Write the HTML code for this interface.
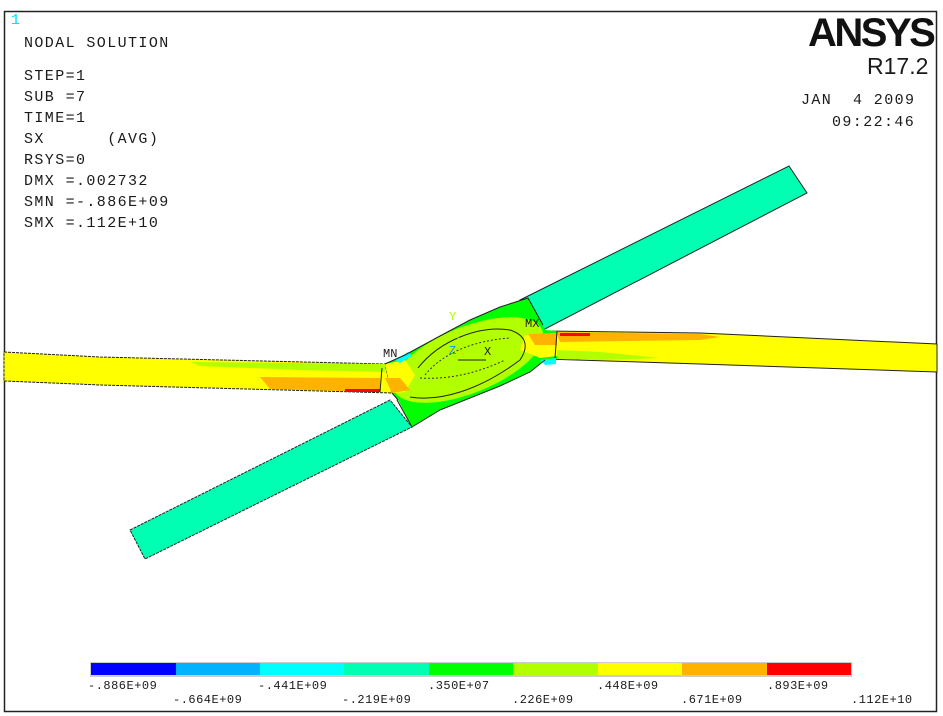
<!DOCTYPE html>
<html><head><style>
html,body{margin:0;padding:0;background:#fff;}
body{width:943px;height:716px;position:relative;overflow:hidden;font-family:"Liberation Mono",monospace;}
.t{position:absolute;font-size:15px;color:#1a1a1a;white-space:pre;line-height:15px;letter-spacing:1.4px;}
.s{letter-spacing:0.5px;font-size:12px;line-height:13px;}
</style></head><body>
<svg width="943" height="716" style="position:absolute;left:0;top:0">
<rect x="4.5" y="11.5" width="932" height="700" fill="none" stroke="#222" stroke-width="1.5"/>
<polygon points="4,352 100,357 385,364 392,393 100,385 4,381" fill="#ffff00" stroke="#222" stroke-width="1" stroke-dasharray="3,1"/>
<polygon points="190,362 385,364 385,372 300,370 200,366" fill="#b2ff00"/>
<polygon points="260,377 380,378 380,392 270,389" fill="#ffb200"/>
<polygon points="345,389 380,389 380,392 345,392" fill="#ff0000"/>
<polygon points="545,331 700,333 937,344 937,372 700,364 545,359" fill="#ffff00" stroke="#222" stroke-width="1"/>
<polygon points="556,332 700,334 720,337 700,340 560,342" fill="#ffb200"/>
<polygon points="560,333 590,333 590,336 560,336" fill="#ff0000"/>
<polygon points="556,350 600,352 660,358 600,360 556,359" fill="#b2ff00"/>
<polygon points="130,530 390,400 412,427 145,559" fill="#00ffb2" stroke="#222" stroke-width="1" stroke-dasharray="3,1"/>
<polygon points="520,300 789,166 807,193 543,330" fill="#00ffb2" stroke="#222" stroke-width="1"/>
<polygon points="385,364 405,355 440,336 470,320 500,307 528,298 545,330 557,331 557,359 545,360 530,372 500,386 470,398 440,410 412,427 398,400 392,393" fill="#00ff00"/>
<ellipse cx="468" cy="360" rx="80" ry="33" transform="rotate(-22 468 360)" fill="#b2ff00"/>
<polygon points="385,364 405,360 415,375 405,392 392,393" fill="#ffff00"/>
<polygon points="385,378 400,378 410,390 392,393" fill="#ffb200"/>
<polygon points="525,335 557,333 557,356 540,358 520,350" fill="#ffff00"/>
<polygon points="528,334 557,333 557,345 535,345" fill="#ffb200"/>
<polygon points="395,360 408,352 412,356 400,363" fill="#00ffff"/>
<polygon points="540,360 556,358 556,364 545,365" fill="#00ffff"/>
<path d="M385,364 L405,355 440,336 470,320 500,307 528,298" fill="none" stroke="#222" stroke-width="1"/>
<path d="M392,393 L398,400" fill="none" stroke="#222"/>
<path d="M545,360 L530,372 500,386 470,398 440,410 412,427" fill="none" stroke="#222"/>
<path d="M410,397 C440,402 480,390 520,360 C530,345 525,335 510,330 C480,325 440,340 418,368" fill="none" stroke="#222" stroke-width="1"/>
<path d="M425,375 C445,350 480,340 510,338 M420,378 C450,380 480,372 505,360" fill="none" stroke="#333" stroke-width="1" stroke-dasharray="2,2"/>
<path d="M382,368 L380,392 M557,331 L555,358 M528,298 L543,325 M397,400 L412,427" fill="none" stroke="#222" stroke-width="1"/>
<path d="M458,360 L486,360" stroke="#222" stroke-width="1"/>
<path d="M458,328 L458,340" stroke="#b2ff00" stroke-width="1"/>
<rect x="90" y="662" width="762" height="15" fill="#ccc"/>
<rect x="91" y="663" width="85" height="12" fill="#0000ff"/>
<rect x="176" y="663" width="84" height="12" fill="#00b2ff"/>
<rect x="260" y="663" width="84" height="12" fill="#00ffff"/>
<rect x="344" y="663" width="85" height="12" fill="#00ffb2"/>
<rect x="429" y="663" width="84" height="12" fill="#00ff00"/>
<rect x="513" y="663" width="85" height="12" fill="#b2ff00"/>
<rect x="598" y="663" width="84" height="12" fill="#ffff00"/>
<rect x="682" y="663" width="85" height="12" fill="#ffb200"/>
<rect x="767" y="663" width="84" height="12" fill="#ff0000"/>
</svg>
<div class="t" style="left:11px;top:13px;color:#00e0ff">1</div>
<div class="t" style="left:24px;top:36px">NODAL SOLUTION</div>
<div class="t" style="left:24px;top:66px;line-height:21px">STEP=1
SUB =7
TIME=1
SX      (AVG)
RSYS=0
DMX =.002732
SMN =-.886E+09
SMX =.112E+10</div>
<div class="t" style="left:808px;top:10px;font-family:'Liberation Sans',sans-serif;font-size:40px;line-height:46px;font-weight:bold;color:#111;letter-spacing:-2.5px">ANSYS</div>
<div class="t" style="left:867px;top:53px;font-family:'Liberation Sans',sans-serif;font-size:23px;line-height:26px;letter-spacing:0">R17.2</div>
<div class="t" style="left:801px;top:93px">JAN  4 2009</div>
<div class="t" style="left:832px;top:115px">09:22:46</div>
<div class="t" style="left:383px;top:347px;font-size:12px;letter-spacing:0">MN</div>
<div class="t" style="left:525px;top:317px;font-size:12px;letter-spacing:0">MX</div>
<div class="t" style="left:449px;top:310px;font-size:12px;color:#b2ff00;letter-spacing:0">Y</div>
<div class="t" style="left:449px;top:344px;font-size:12px;color:#00a0ff;letter-spacing:0">Z</div>
<div class="t" style="left:484px;top:345px;font-size:12px;letter-spacing:0">X</div>
<div class="t s" style="left:88px;top:680px">-.886E+09</div>
<div class="t s" style="left:258px;top:680px">-.441E+09</div>
<div class="t s" style="left:428px;top:680px">.350E+07</div>
<div class="t s" style="left:597px;top:680px">.448E+09</div>
<div class="t s" style="left:767px;top:680px">.893E+09</div>
<div class="t s" style="left:173px;top:694px">-.664E+09</div>
<div class="t s" style="left:342px;top:694px">-.219E+09</div>
<div class="t s" style="left:512px;top:694px">.226E+09</div>
<div class="t s" style="left:681px;top:694px">.671E+09</div>
<div class="t s" style="left:851px;top:694px">.112E+10</div>
</body></html>
